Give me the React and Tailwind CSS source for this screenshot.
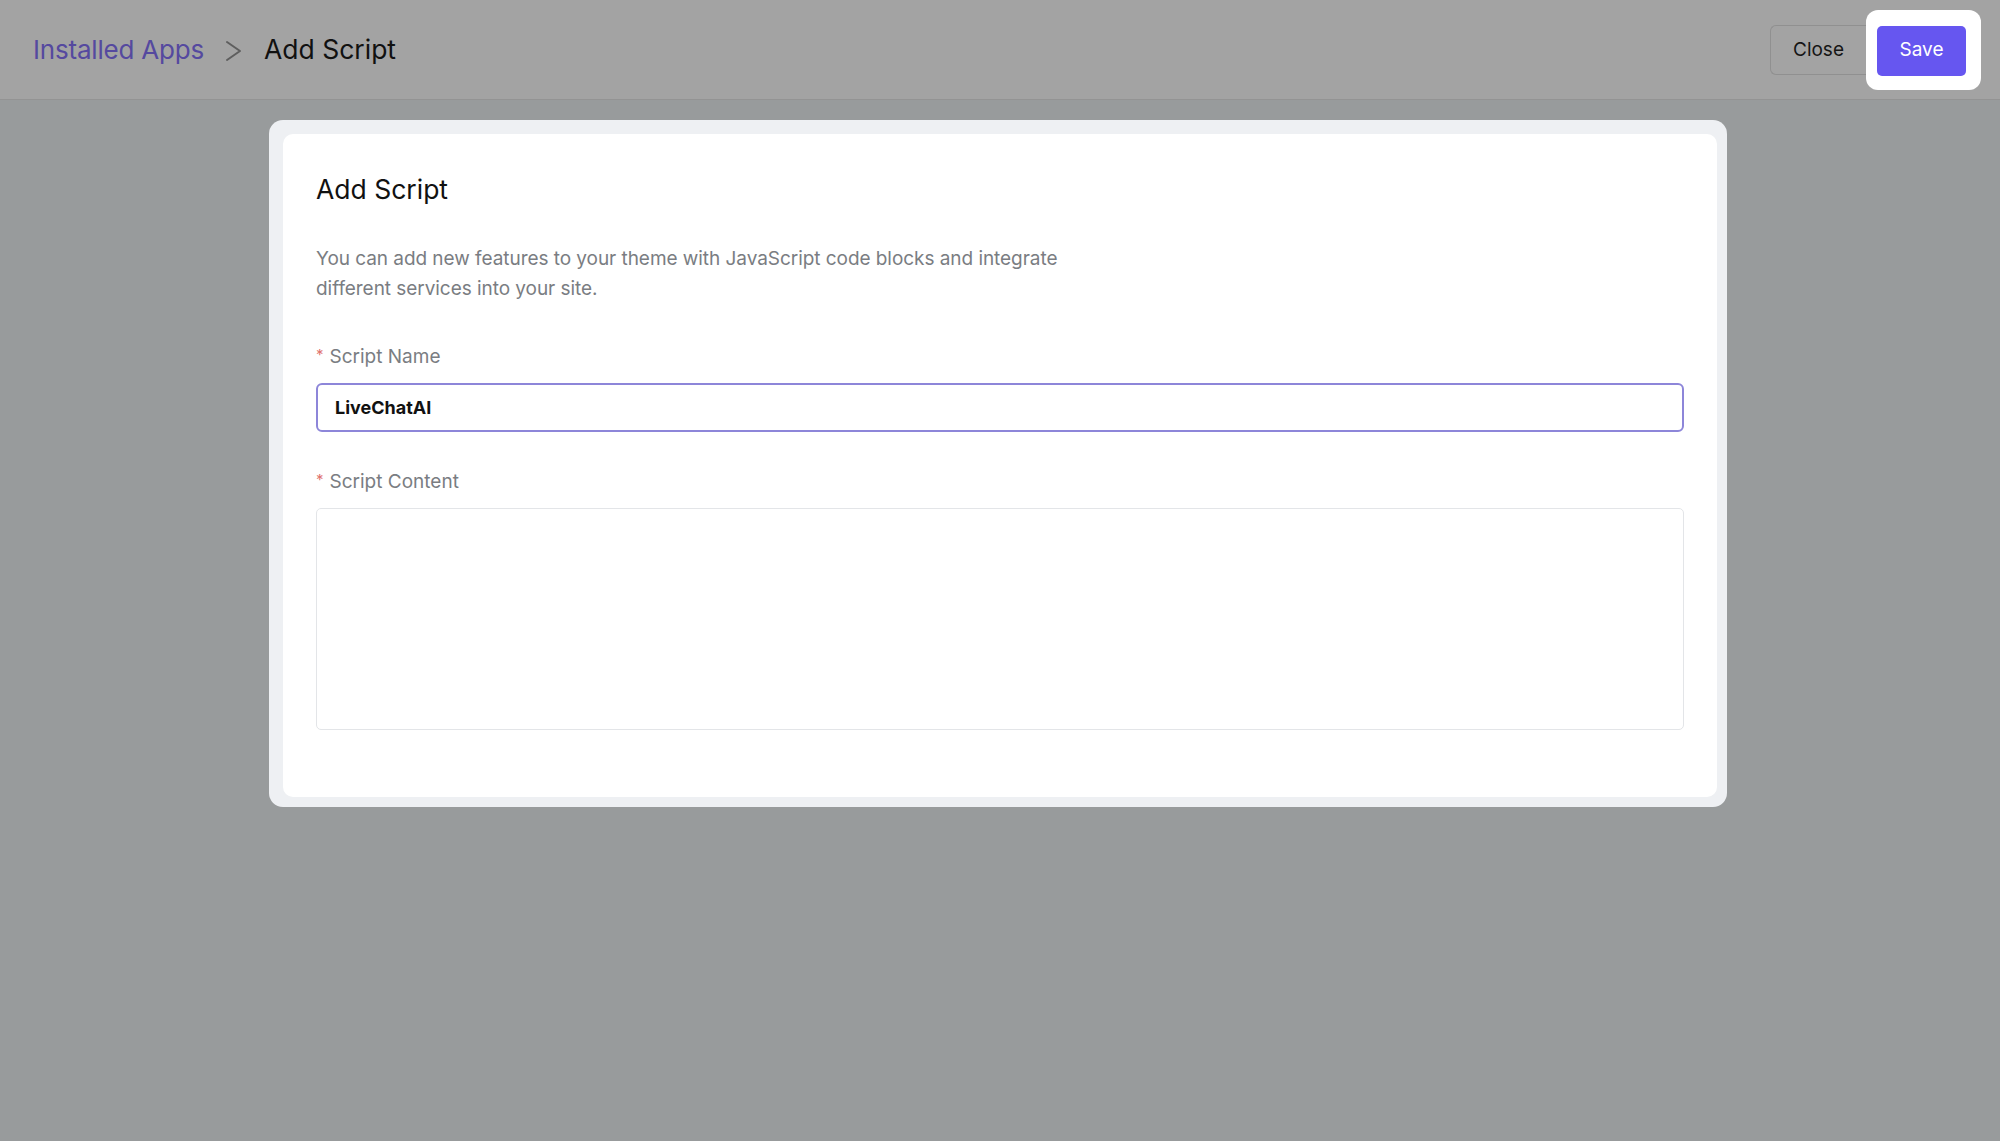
// screenshot palette (dimmed page behind a tour spotlight)
// #a3a3a3 header, #989b9c body, #6656f0 save

function Header() {
  return (
    <div className="h-[100px] flex items-center justify-between pl-[33px] pr-[19px] bg-[#a3a3a3] border-b border-[#939393]">
      <div className="flex items-center text-[26px]">
        <span className="text-[#55499f] tracking-[-0.2px]">Installed Apps</span>
        <svg className="ml-[21px] mr-[22px] mt-[3px]" width="17" height="22" viewBox="0 0 17 22" fill="none">
          <polyline points="2,2 15,11 2,20" stroke="#5e5e5e" strokeWidth="2" strokeLinecap="round" strokeLinejoin="round" />
        </svg>
        <span className="text-[#111111] text-[26.5px]">Add Script</span>
      </div>
      <div className="flex items-center">
        <button className="w-[96px] h-[50px] pt-[2px] rounded-l-[6px] border border-r-0 border-[#909090] text-[19px] text-[#151515]">
          Close
        </button>
        <div className="bg-white rounded-[12px] pl-[11px] pr-[15px] pt-[16px] pb-[14px]">
          <button className="w-[89px] h-[50px] rounded-[5px] bg-[#6656f0] text-white text-[19px]">
            Save
          </button>
        </div>
      </div>
    </div>
  );
}

function Label({ children }) {
  return (
    <div className="flex items-center text-[19px] leading-[28px] text-[#7a7d82]">
      <span className="text-[#e0736f] text-[15px] mr-[6px] -mt-[4px]">*</span>
      {children}
    </div>
  );
}

function App() {
  return (
    <div
      className="w-[2000px] h-[1141px] bg-[#989b9c] overflow-hidden"
      style={{ fontFamily: "Inter, 'Noto Sans', sans-serif" }}
    >
      <Header />
      <div className="w-[1458px] ml-[269px] mt-[20px] bg-[#eef0f3] rounded-[14px] pl-[14px] pr-[10px] pt-[14px] pb-[10px]">
        <div className="bg-white rounded-[10px] px-[33px] pt-[38px] pb-[67px]">
          <h1 className="text-[26.5px] leading-[34px] text-[#111111]">Add Script</h1>
          <p className="mt-[38px] max-w-[760px] text-[19px] leading-[30px] tracking-[-0.05px] text-[#7a7d82]">
            You can add new features to your theme with JavaScript code blocks and integrate different services into your site.
          </p>
          <div className="mt-[39px]">
            <Label>Script Name</Label>
          </div>
          <div className="mt-[12px] h-[49px] rounded-[6px] border-2 border-[#8d86d9] flex items-center px-[17px] text-[18px] font-bold text-[#111111]">
            LiveChatAI
          </div>
          <div className="mt-[36px]">
            <Label>Script Content</Label>
          </div>
          <div className="mt-[12px] h-[222px] rounded-[5px] border border-[#e3e5e8]" />
        </div>
      </div>
    </div>
  );
}

export default App;
